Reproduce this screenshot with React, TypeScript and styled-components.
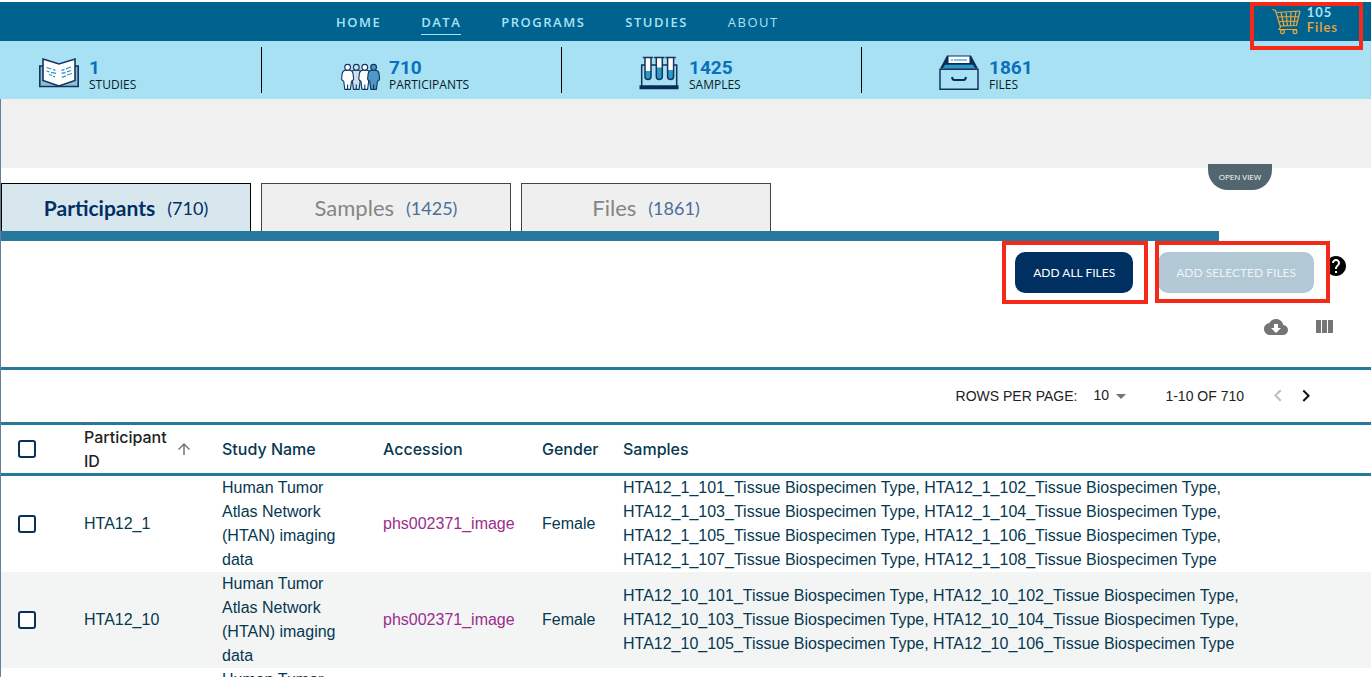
import React from 'react';
import styled, { createGlobalStyle } from 'styled-components';

const GlobalStyle = createGlobalStyle`
  * { box-sizing: border-box; }
  body {
    margin: 0;
    background: #fff;
    font-family: "Liberation Sans", Arial, sans-serif;
  }
  button, select, input { font: inherit; margin: 0; }
`;

const Page = styled.div`
  height: 100vh;
  overflow: hidden;
  padding-top: 2px;
  display: flex;
  flex-direction: column;
`;

const Header = styled.header`
  position: relative;
  flex: none;
  height: 39px;
  background: #00638f;
  display: flex;
  justify-content: space-between;
  padding: 0 33px 0 336px;
`;

const Nav = styled.nav`
  display: flex;
  align-items: center;
  gap: 40px;
  padding-top: 3px;
`;

const NavLink = styled.a<{ $active?: boolean; $light?: boolean }>`
  font: ${p => (p.$light ? 400 : 600)} 13px/20px "Open Sans", sans-serif;
  letter-spacing: 1.5px;
  color: #a9e2f5;
  text-decoration: none;
  padding: 0 0 2px;
  border-bottom: 1px solid ${p => (p.$active ? '#a9e2f5' : 'transparent')};
`;

const Highlight = styled.span<{ $inset: string }>`
  position: absolute;
  inset: ${p => p.$inset};
  border: 4px solid #f62817;
  pointer-events: none;
  z-index: 2;
`;

const CartLink = styled.a`
  position: relative;
  display: flex;
  gap: 6px;
  padding-top: 3px;
  color: #f0a53a;
  text-decoration: none;
  font: 600 13px/15px Lato, sans-serif;
  letter-spacing: 1px;
  svg { margin-top: 3px; }
  strong { display: block; color: #a9e2f5; font-weight: 700; }
`;

const Stats = styled.ul`
  flex: none;
  height: 58px;
  margin: 0;
  padding: 6px 0;
  list-style: none;
  background: #a8e1f4;
  display: flex;
`;

const Stat = styled.li`
  width: 300px;
  padding: 8px 0 0 77px;
  display: flex;
  gap: 10px;
  border-right: 1px solid #000;
  &:first-child { width: 262px; padding-left: 39px; }
  &:last-child { border-right: 0; }
  svg { flex: none; overflow: visible; }
`;

const StatText = styled.div`
  padding-top: 3px;
  font: 400 12px/16px "Open Sans", sans-serif;
  color: #061d26;
  strong {
    display: block;
    font: 700 19px/19px Roboto, sans-serif;
    color: #0a70bd;
  }
`;

const Body = styled.main`
  position: relative;
  flex: 1;
  border-left: 1px solid #66809a;
`;

const FilterBand = styled.div`
  position: relative;
  height: 69px;
  background: #f0f0f0;
`;

const OpenView = styled.button`
  position: absolute;
  right: 99px;
  top: 65px;
  width: 64px;
  height: 26px;
  padding: 0;
  border: 0;
  border-radius: 0 0 20px 20px;
  background: #526670;
  color: #fff;
  font: 400 8px/26px "Open Sans", sans-serif;
`;

const Tabs = styled.div`
  display: flex;
  gap: 10px;
  padding-top: 15px;
  margin-right: 152px;
  border-bottom: 10px solid #26789c;
`;

const Tab = styled.button<{ $active?: boolean }>`
  width: 250px;
  height: 48px;
  padding: 0;
  display: flex;
  align-items: center;
  justify-content: center;
  gap: 12px;
  border: 1px solid ${p => (p.$active ? '#000' : '#444')};
  border-bottom: 0;
  background: ${p => (p.$active ? '#d8e7ee' : '#efefef')};
  color: ${p => (p.$active ? '#003065' : '#858585')};
  font: ${p => (p.$active ? '700 21px' : '400 22px')}/28px Lato, sans-serif;
  span {
    font: 400 18px/28px Lato, sans-serif;
    color: ${p => (p.$active ? '#003065' : '#4b6f99')};
  }
`;

const Actions = styled.div`
  display: flex;
  justify-content: flex-end;
  padding: 11px 23px 0 0;
`;

const ActionSlot = styled.div`
  position: relative;
  margin-right: 25px;
  &:nth-child(2) { margin-right: 10px; }
`;

const ActionButton = styled.button`
  height: 41px;
  padding: 0 18px;
  border: 0;
  border-radius: 10px;
  background: #002f61;
  color: #fff;
  font: 400 12px/40px Lato, sans-serif;
  &:disabled { background: #b2c8d5; color: #edf3f6; }
`;

const IconButton = styled.button<{ $color: string }>`
  display: block;
  width: 24px;
  height: 24px;
  padding: 0;
  border: 0;
  background: none;
  color: ${p => p.$color};
  svg { display: block; fill: currentColor; }
`;

const HelpSlot = styled.div`
  padding-top: 2px;
`;

const TableTools = styled.div`
  display: flex;
  justify-content: flex-end;
  gap: 24px;
  padding: 22px 35px 28px 0;
`;

const Pager = styled.div`
  height: 58px;
  border-top: 3px solid #26789c;
  border-bottom: 3px solid #26789c;
  display: flex;
  align-items: center;
  justify-content: flex-end;
  padding-right: 53px;
  font-size: 14px;
  line-height: 20px;
  color: #222;
`;

const RowsSelect = styled.div`
  position: relative;
  display: flex;
  align-items: center;
  margin: 0 32px 0 16px;
  select {
    appearance: none;
    width: 40px;
    height: 24px;
    padding: 0 24px 2px 0;
    border: 0;
    background: none;
    color: inherit;
  }
  svg {
    position: absolute;
    right: 0;
    top: 0;
    pointer-events: none;
    fill: #757575;
  }
`;

const PageButtons = styled.div`
  display: flex;
  gap: 4px;
  margin-left: 22px;
`;

const Table = styled.table`
  width: 100%;
  table-layout: fixed;
  border-collapse: separate;
  border-spacing: 0;
  color: #06384f;
  font-size: 16px;
  line-height: 24px;
  text-align: left;
  th {
    height: 51px;
    padding: 0;
    border-bottom: 3px solid #26789c;
    font: 500 16px/24px Inter, sans-serif;
  }
  td { height: 96px; padding: 0; }
  td:nth-child(3) { padding-right: 24px; }
  td:last-child { padding-right: 40px; }
  tbody tr:nth-child(even) { background: #f3f5f5; }
  a { color: #9c2c8c; text-decoration: none; }
`;

const SortButton = styled.button`
  display: flex;
  align-items: center;
  gap: 4px;
  width: 109px;
  padding: 0;
  border: 0;
  background: none;
  color: #222;
  text-align: left;
  span { flex: 1; }
  svg { fill: #757575; flex: none; }
`;

const Check = styled.input`
  appearance: none;
  display: block;
  width: 18px;
  height: 18px;
  margin: 0 0 0 17px;
  border: 2px solid #07305c;
  border-radius: 3px;
  background: #fff;
`;

const navy = '#123560';

const BookIcon = () => (
  <svg width="40" height="36" viewBox="0 0 40 36" fill="none">
    <path d="M4 11H.8v20.5h38.4V11H36" fill="#8fbdd6" stroke={navy} strokeWidth="1.6" />
    <path d="M4 4l16 5 16-5v21.500L20 31 4 25.500z" fill="#fff" stroke={navy} strokeWidth="1.6" />
    <path d="M7.500 12.500l5 1.500M14 14.500l2.500 .8M7.500 16l3 1M12 17.300l5 1M10 19.500l3 1M14 21.300l2 .6M32 12l-5 1.800M25.500 14.500l-3 .8M32 15.500l-4 1.300M26.500 17.500l-4 .8M33 18.500l-5 1.500M27 20.800l-4 1.500" stroke="#2797c6" strokeWidth="1.300" />
  </svg>
);

const people = [
  { x: 17.3, fill: '#cddfec' },
  { x: 8.6, fill: '#fff' },
  { x: 25.8, fill: '#fff' },
  { x: 34.6, fill: '#4f97c4' },
];

const PeopleIcon = () => (
  <svg width="40" height="36" viewBox="0 0 40 36">
    {people.map(p => (
      <g key={p.x} transform={`translate(${p.x} 0)`} fill={p.fill} stroke={navy} strokeWidth="1.1" strokeLinejoin="round">
        <path d="M-2.500 15.200h5Q5 15.700 5.500 19L6 24Q5.500 26 3.900 26L2.800 34.400H-2.800L-3.900 26Q-5.500 26-6 24L-5.500 19Q-5 15.700-2.500 15.200z" />
        <path d="M0 29.500V34" fill="none" />
        <circle cx="0" cy="12.300" r="2.900" />
      </g>
    ))}
  </svg>
);

const tubes = [
  { x: 9, level: 16 },
  { x: 20.3, level: 12.500 },
  { x: 31.600, level: 15 },
];

const TubesIcon = () => (
  <svg width="40" height="36" viewBox="0 0 40 36">
    <path d="M2.700 31V10h35v21" fill="none" stroke={navy} strokeWidth="1.500" />
    <path d="M.5 30.300h39v4H.5z" fill="#0b2c55" />
    {tubes.map(t => (
      <g key={t.x} transform={`translate(${t.x} 0)`}>
        <path d="M-3 2.500V21.500a3 3 0 0 0 6 0V2.500z" fill="#fff" />
        <path d={`M-3 ${t.level}V21.500a3 3 0 0 0 6 0V${t.level}z`} fill="#2a9bc8" />
        <path d="M-3 2.500V21.500a3 3 0 0 0 6 0V2.500M-5.200 2.500H5.200" fill="none" stroke={navy} strokeWidth="1.500" />
      </g>
    ))}
  </svg>
);

const DrawerIcon = () => (
  <svg width="40" height="36" viewBox="0 0 40 36">
    <path d="M8 .5h24L39 13.500H1z" fill="#0b2c55" />
    <path d="M9.500 1.500h21V8h-21z" fill="#fff" />
    <path d="M12 4h2v2h-2zM15 4h13v2H15z" fill="#7cc7e4" />
    <path d="M6 9.700h28l2 3.300H4z" fill="#2a9bc8" />
    <path d="M1 14.200h38v20H1z" fill="#a8e1f4" stroke={navy} strokeWidth="1.500" />
    <path d="M13 22q.5 3 2.500 3h9q2 0 2.500-3" fill="none" stroke="#0b2c55" strokeWidth="2" />
  </svg>
);

const CartIcon = () => (
  <svg width="29" height="27" viewBox="0 0 29 27" fill="none" stroke="#f0a53a" strokeWidth="1.200">
    <path d="M.5 1.500l3 1 5 16.500-1.500 2.500H25M4 4.500L28 3M28 3l-3.500 14.500L8 18M5.200 9l21.500-.5M6.700 13.500l19-.5M9 4.500l3 13.500M14 4l1.500 14M19 3.800L18.500 18M24 3.500L21.500 17.700" />
    <circle cx="10.500" cy="23.800" r="1.900" />
    <circle cx="23" cy="23.800" r="1.900" />
  </svg>
);

const Glyph = ({ d, size = 24 }: { d: string; size?: number }) => (
  <svg width={size} height={size} viewBox="0 0 24 24" aria-hidden="true">
    <path d={d} />
  </svg>
);

const glyphs = {
  help: 'M12 2C6.480 2 2 6.480 2 12s4.480 10 10 10 10-4.480 10-10S17.520 2 12 2zm1 17h-2v-2h2v2zm2.070-7.750l-.9.920C13.450 12.900 13 13.500 13 15h-2v-.5c0-1.100.450-2.100 1.170-2.830l1.240-1.260c.370-.360.590-.860.590-1.410 0-1.100-.9-2-2-2s-2 .9-2 2H8c0-2.210 1.790-4 4-4s4 1.790 4 4c0 .880-.360 1.680-.930 2.250z',
  cloud: 'M19.350 10.040C18.670 6.590 15.640 4 12 4 9.110 4 6.600 5.640 5.350 8.040 2.340 8.360 0 10.910 0 14c0 3.310 2.690 6 6 6h13c2.760 0 5-2.240 5-5 0-2.640-2.050-4.780-4.650-4.960zM17 13l-5 5-5-5h3V9h4v4h3z',
  columns: 'M10 18h5V5h-5v13zm-6 0h5V5H4v13zM16 5v13h5V5h-5z',
  caret: 'M7 10l5 5 5-5z',
  left: 'M15.410 16.090l-4.580-4.590 4.580-4.590L14 5.500l-6 6 6 6z',
  right: 'M8.590 16.340l4.580-4.590-4.580-4.590L10 5.750l6 6-6 6z',
  up: 'M4 12l1.410 1.410L11 7.830V20h2V7.830l5.580 5.590L20 12l-8-8-8 8z',
};

const stats = [
  { icon: <BookIcon />, value: 1, label: 'STUDIES' },
  { icon: <PeopleIcon />, value: 710, label: 'PARTICIPANTS' },
  { icon: <TubesIcon />, value: 1425, label: 'SAMPLES' },
  { icon: <DrawerIcon />, value: 1861, label: 'FILES' },
];

const study = 'Human Tumor Atlas Network (HTAN) imaging data';
const sampleList = (id: string, numbers: number[]) =>
  numbers.map(n => `${id}_${n}_Tissue Biospecimen Type`).join(', ');

const rows = [
  { id: 'HTA12_1', gender: 'Female', samples: sampleList('HTA12_1', [101, 102, 103, 104, 105, 106, 107, 108]) },
  { id: 'HTA12_10', gender: 'Female', samples: sampleList('HTA12_10', [101, 102, 103, 104, 105, 106]) },
  { id: 'HTA12_11', gender: 'Female', samples: sampleList('HTA12_11', [101, 102]) },
];

export default function App() {
  return (
    <>
      <GlobalStyle />
      <Page>
        <Header>
          <Nav>
            <NavLink href="#home">HOME</NavLink>
            <NavLink href="#data" $active>DATA</NavLink>
            <NavLink href="#programs">PROGRAMS</NavLink>
            <NavLink href="#studies">STUDIES</NavLink>
            <NavLink href="#about" $light>ABOUT</NavLink>
          </Nav>
          <CartLink href="#cart">
            <CartIcon />
            <span><strong>105</strong>Files</span>
            <Highlight $inset="0 -25px -9px -22px" />
          </CartLink>
        </Header>
        <Stats>
          {stats.map(s => (
            <Stat key={s.label}>
              {s.icon}
              <StatText><strong>{s.value}</strong>{s.label}</StatText>
            </Stat>
          ))}
        </Stats>
        <Body>
          <FilterBand><OpenView>OPEN VIEW</OpenView></FilterBand>
          <Tabs role="tablist">
            <Tab role="tab" aria-selected="true" $active>Participants <span>(710)</span></Tab>
            <Tab role="tab" aria-selected="false">Samples <span>(1425)</span></Tab>
            <Tab role="tab" aria-selected="false">Files <span>(1861)</span></Tab>
          </Tabs>
          <Actions>
            <ActionSlot>
              <ActionButton>ADD ALL FILES</ActionButton>
              <Highlight $inset="-11px -15px -11px -13px" />
            </ActionSlot>
            <ActionSlot>
              <ActionButton disabled>ADD SELECTED FILES</ActionButton>
              <Highlight $inset="-11px -16px -10px -3px" />
            </ActionSlot>
            <HelpSlot>
              <IconButton $color="#000" aria-label="Help"><Glyph d={glyphs.help} /></IconButton>
            </HelpSlot>
          </Actions>
          <TableTools>
            <IconButton $color="#757575" aria-label="Download table"><Glyph d={glyphs.cloud} /></IconButton>
            <IconButton $color="#757575" aria-label="View columns"><Glyph d={glyphs.columns} /></IconButton>
          </TableTools>
          <Pager>
            <label htmlFor="rows">ROWS PER PAGE:</label>
            <RowsSelect>
              <select id="rows" defaultValue="10">
                <option>10</option>
                <option>25</option>
                <option>50</option>
              </select>
              <Glyph d={glyphs.caret} />
            </RowsSelect>
            <span>1-10 OF 710</span>
            <PageButtons>
              <IconButton $color="#bdbdbd" aria-label="Previous page" disabled><Glyph d={glyphs.left} /></IconButton>
              <IconButton $color="#111" aria-label="Next page"><Glyph d={glyphs.right} /></IconButton>
            </PageButtons>
          </Pager>
          <Table>
            <colgroup>
              <col style={{ width: 83 }} />
              <col style={{ width: 138 }} />
              <col style={{ width: 161 }} />
              <col style={{ width: 159 }} />
              <col style={{ width: 81 }} />
              <col />
            </colgroup>
            <thead>
              <tr>
                <th><Check type="checkbox" aria-label="Select all rows" /></th>
                <th><SortButton><span>Participant ID</span><Glyph d={glyphs.up} size={18} /></SortButton></th>
                <th>Study Name</th>
                <th>Accession</th>
                <th>Gender</th>
                <th>Samples</th>
              </tr>
            </thead>
            <tbody>
              {rows.map(r => (
                <tr key={r.id}>
                  <td><Check type="checkbox" aria-label={`Select ${r.id}`} /></td>
                  <td>{r.id}</td>
                  <td>{study}</td>
                  <td><a href="#phs002371">phs002371_image</a></td>
                  <td>{r.gender}</td>
                  <td>{r.samples}</td>
                </tr>
              ))}
            </tbody>
          </Table>
        </Body>
      </Page>
    </>
  );
}
